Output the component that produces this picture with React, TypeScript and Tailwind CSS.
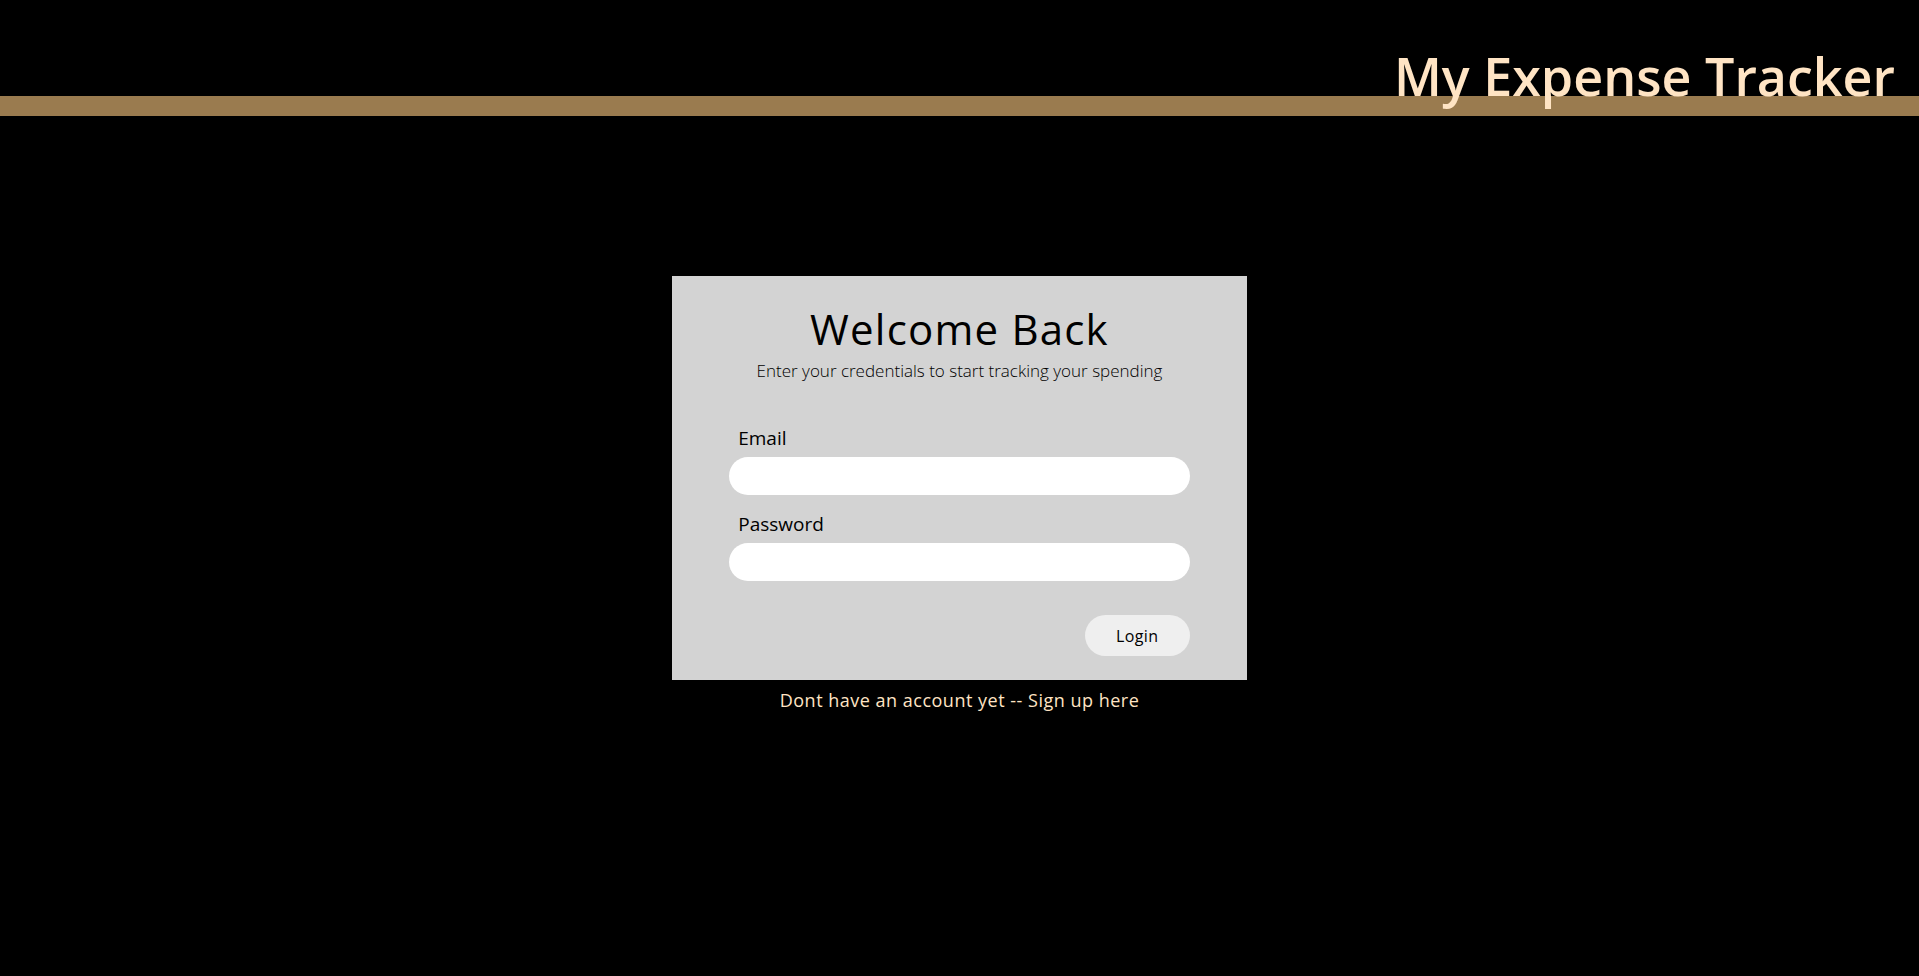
export default function App() {
  return (
    <div className="min-h-[976px] bg-black font-['Open_Sans',sans-serif]">
      <header className="h-[96px] flex justify-end items-start pt-[50px] pr-[24px]">
        <h1 className="relative z-10 text-[52px] leading-none font-semibold text-[#ffe4c4]">
          My Expense Tracker
        </h1>
      </header>
      <div className="h-[20px] bg-[#9a7b4f]" />

      <main className="flex flex-col items-center pt-[160px]">
        <div className="w-[30%] bg-[#d3d3d3] pt-8 pb-6 flex flex-col items-center">
          <h2 className="text-[42px] leading-none tracking-[1.2px] text-black">Welcome Back</h2>
          <p className="mt-[12px] text-[17px] leading-none font-light text-black">
            Enter your credentials to start tracking your spending
          </p>

          <form className="w-[80%] mt-[50px] flex flex-col">
            <label className="pl-[9px] text-[19px] leading-none font-medium text-black">Email</label>
            <input type="email" className="mt-[9px] h-[38px] rounded-full bg-white px-4 outline-none" />
            <label className="mt-[20px] pl-[9px] text-[19px] leading-none font-medium text-black">Password</label>
            <input type="password" className="mt-[9px] h-[38px] rounded-full bg-white px-4 outline-none" />
            <div className="flex justify-end mt-[34px]">
              <button type="button" className="w-[105px] h-[41px] rounded-full bg-[#efefef] text-base text-black tracking-wide">
                Login
              </button>
            </div>
          </form>
        </div>
        <p className="mt-[11px] text-[18px] leading-none tracking-[0.5px] text-[#ffe4c4]">
          Dont have an account yet -- Sign up here
        </p>
      </main>
    </div>
  );
}
